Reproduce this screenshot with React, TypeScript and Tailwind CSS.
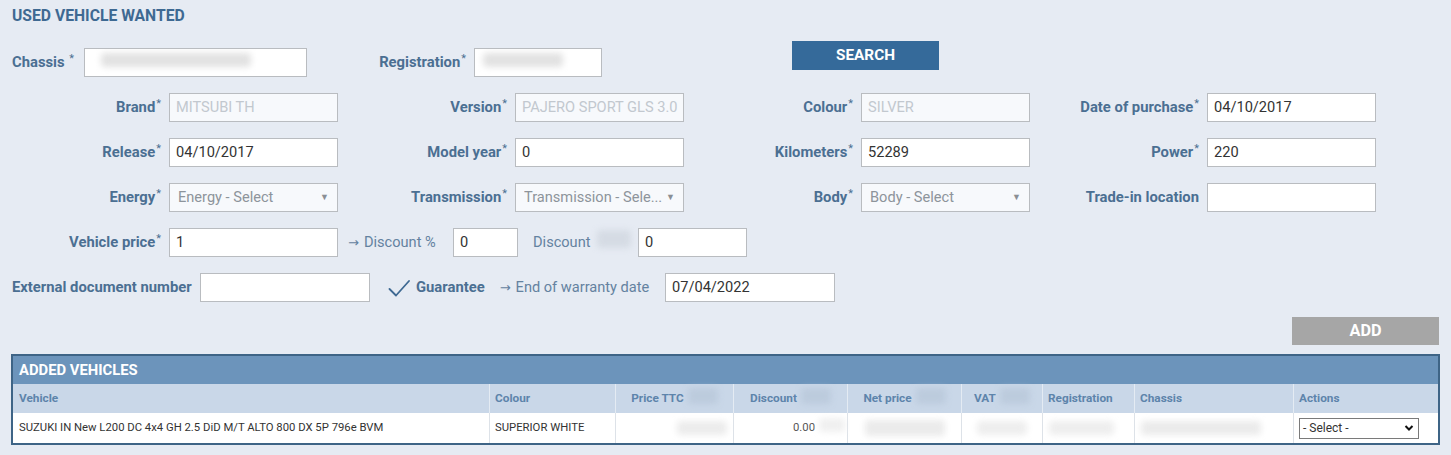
import React from "react";

const LABEL = "text-[#4b6f92] font-bold text-[14.8px] whitespace-nowrap";
const PLAIN = "text-[14.6px] text-[#6482a0] whitespace-nowrap";

function Star() {
  return <span className="relative -top-[5px] ml-[1px] text-[11px] font-normal">*</span>;
}

function Label({ text, star = true }: { text: string; star?: boolean }) {
  return (
    <div className={`w-[161px] text-right ${LABEL}`}>
      {text}
      {star && <Star />}
    </div>
  );
}

function Box({
  value = "",
  disabled = false,
  w = "w-[169px]",
  children,
}: {
  value?: string;
  disabled?: boolean;
  w?: string;
  children?: React.ReactNode;
}) {
  return (
    <div
      className={`${w} shrink-0 h-[29px] border border-[#b9bcc0] flex items-center px-[6px] text-[14.6px] overflow-hidden whitespace-nowrap ${
        disabled ? "bg-[#f7f9fc] text-[#c2c8cf]" : "bg-white text-[#333]"
      }`}
    >
      {value}
      {children}
    </div>
  );
}

function Select({ text }: { text: string }) {
  return (
    <div className="w-[169px] h-[29px] border border-[#b9bcc0] bg-[#f7f9fc] flex items-center pl-[8px] pr-[8px] text-[14.6px] text-[#8d949b] whitespace-nowrap">
      <span className="flex-1 overflow-hidden">{text}</span>
      <span className="text-[#8a8f95] text-[9px] ml-[4px]">▼</span>
    </div>
  );
}

function Cell({ label, star = true, children }: { label: string; star?: boolean; children: React.ReactNode }) {
  return (
    <div className="flex items-center gap-[8px] w-[346px] shrink-0">
      <Label text={label} star={star} />
      {children}
    </div>
  );
}

function Blur({ w, h = "h-[12px]", c = "bg-[#dfe2e6]" }: { w: string; h?: string; c?: string }) {
  return <span className={`inline-block ${w} ${h} ${c} blur-[3px] rounded`} />;
}

function Arrow() {
  return <span className="font-['DejaVu_Sans',sans-serif] text-[13px] mr-[5px]">→</span>;
}

const cols = [
  { w: "w-[476px]", name: "Vehicle", align: "left" },
  { w: "w-[126px]", name: "Colour", align: "left" },
  { w: "w-[118px]", name: "Price TTC", align: "center" },
  { w: "w-[114px]", name: "Discount", align: "center" },
  { w: "w-[114px]", name: "Net price", align: "center" },
  { w: "w-[81px]", name: "VAT", align: "center" },
  { w: "w-[92px]", name: "Registration", align: "left" },
  { w: "w-[159px]", name: "Chassis", align: "left" },
  { w: "flex-1", name: "Actions", align: "left" },
];

export default function App() {
  return (
    <div className="min-h-[455px] w-[1451px] bg-[#e6ebf3] font-['Roboto',sans-serif] overflow-hidden">
      <div className="pl-[12px] pt-[5px] h-[41px] text-[15.7px] font-bold text-[#3e6992] leading-[22px]">
        USED VEHICLE WANTED
      </div>

      {/* Row 1 */}
      <div className="flex items-start h-[36px]">
        <div className="flex items-center mt-[7px] pl-[12px]">
          <div className={`w-[72px] ${LABEL}`}>
            Chassis <Star />
          </div>
          <Box w="w-[223px]">
            <span className="ml-[10px]">
              <Blur w="w-[150px]" h="h-[14px]" c="bg-[#e2e2e2]" />
            </span>
          </Box>
          <div className={`w-[167px] pr-[8px] text-right ${LABEL}`}>
            Registration
            <Star />
          </div>
          <Box w="w-[128px]">
            <span className="ml-[2px]">
              <Blur w="w-[80px]" h="h-[14px]" c="bg-[#e2e2e2]" />
            </span>
          </Box>
        </div>
        <button className="ml-[190px] w-[147px] h-[29px] bg-[#356a9a] text-white font-bold text-[15.3px]">
          SEARCH
        </button>
      </div>

      <div className="flex flex-col gap-[16px] mt-[16px]">
        <div className="flex">
          <Cell label="Brand"><Box value="MITSUBI TH" disabled /></Cell>
          <Cell label="Version"><Box value="PAJERO SPORT GLS 3.0" disabled /></Cell>
          <Cell label="Colour"><Box value="SILVER" disabled /></Cell>
          <Cell label="Date of purchase"><Box value="04/10/2017" /></Cell>
        </div>
        <div className="flex">
          <Cell label="Release"><Box value="04/10/2017" /></Cell>
          <Cell label="Model year"><Box value="0" /></Cell>
          <Cell label="Kilometers"><Box value="52289" /></Cell>
          <Cell label="Power"><Box value="220" /></Cell>
        </div>
        <div className="flex">
          <Cell label="Energy"><Select text="Energy - Select" /></Cell>
          <Cell label="Transmission"><Select text="Transmission - Sele..." /></Cell>
          <Cell label="Body"><Select text="Body - Select" /></Cell>
          <Cell label="Trade-in location" star={false}><Box /></Cell>
        </div>
        <div className="flex items-center">
          <div className="flex items-center gap-[8px] w-[338px] shrink-0">
            <Label text="Vehicle price" />
            <Box value="1" />
          </div>
          <div className={`w-[115px] pl-[10px] ${PLAIN}`}>
            <Arrow />
            Discount %
          </div>
          <Box value="0" w="w-[65px]" />
          <div className={`w-[120px] pl-[15px] flex items-center ${PLAIN}`}>
            Discount
            <span className="ml-[6px]">
              <Blur w="w-[34px]" h="h-[18px]" c="bg-[#d5dbe4]" />
            </span>
          </div>
          <Box value="0" w="w-[109px]" />
        </div>
        <div className="flex items-center pl-[12px]">
          <div className={`w-[188px] ${LABEL}`}>External document number</div>
          <Box w="w-[170px]" />
          <div className="w-[295px] flex items-center pl-[18px]">
            <svg width="22" height="18" viewBox="0 0 22 18">
              <path d="M1.5 10 L8 16.5 L21 2" fill="none" stroke="#3e6992" strokeWidth="1.8" strokeLinecap="round" strokeLinejoin="round" />
            </svg>
            <span className={`ml-[6px] ${LABEL}`}>Guarantee</span>
            <span className={`ml-[15px] ${PLAIN}`}>
              <Arrow />
              End of warranty date
            </span>
          </div>
          <Box value="07/04/2022" w="w-[170px]" />
        </div>
      </div>

      <div className="flex justify-end pr-[12px] mt-[15px]">
        <button className="w-[147px] h-[28px] bg-[#a6a6a6] text-white font-bold text-[16.3px]">ADD</button>
      </div>

      {/* Table */}
      <div className="ml-[11px] w-[1429px] mt-[9px] border-2 border-[#3e6486]">
        <div className="h-[28px] bg-[#6c94bb] text-white font-bold text-[14.8px] flex items-center pl-[6px]">
          ADDED VEHICLES
        </div>
        <div className="flex h-[29px] bg-[#c9d7e8]">
          {cols.map((c, i) => (
            <div
              key={c.name}
              className={`${c.w} shrink-0 ${i > 0 ? "border-l border-[#e4ebf3] px-[5px]" : "px-[6px]"} flex items-center text-[11.8px] font-bold text-[#5d84ab] ${
                c.align === "center" ? "justify-center" : ""
              }`}
            >
              {c.name}
              {c.align === "center" && (
                <span className="ml-[4px]">
                  <Blur w="w-[30px]" h="h-[16px]" c="bg-[#bccbdd]" />
                </span>
              )}
            </div>
          ))}
        </div>
        <div className="flex h-[30px] bg-white text-[11.3px] text-[#333]">
          <div className="w-[476px] shrink-0 flex items-center px-[6px] whitespace-nowrap">
            SUZUKI IN New L200 DC 4x4 GH 2.5 DiD M/T ALTO 800 DX 5P 796e BVM
          </div>
          <div className="w-[126px] shrink-0 border-l border-[#dde2e8] flex items-center px-[5px]">SUPERIOR WHITE</div>
          <div className="w-[118px] shrink-0 border-l border-[#dde2e8] flex items-center justify-end pr-[6px]">
            <Blur w="w-[50px]" h="h-[14px]" c="bg-[#ececec]" />
          </div>
          <div className="w-[114px] shrink-0 border-l border-[#dde2e8] flex items-center justify-end pr-[2px] text-[#555]">
            0.00
            <span className="ml-[4px]">
              <Blur w="w-[26px]" h="h-[14px]" c="bg-[#f0f0f0]" />
            </span>
          </div>
          <div className="w-[114px] shrink-0 border-l border-[#dde2e8] flex items-center justify-center">
            <Blur w="w-[80px]" h="h-[16px]" c="bg-[#ebebeb]" />
          </div>
          <div className="w-[81px] shrink-0 border-l border-[#dde2e8] flex items-center justify-center">
            <Blur w="w-[50px]" h="h-[14px]" c="bg-[#eeeeee]" />
          </div>
          <div className="w-[92px] shrink-0 border-l border-[#dde2e8] flex items-center px-[6px]">
            <Blur w="w-[65px]" h="h-[14px]" c="bg-[#eeeeee]" />
          </div>
          <div className="w-[159px] shrink-0 border-l border-[#dde2e8] flex items-center px-[6px]">
            <Blur w="w-[120px]" h="h-[14px]" c="bg-[#ebebeb]" />
          </div>
          <div className="flex-1 border-l border-[#dde2e8] flex items-center px-[5px]">
            <div className="w-[120px] h-[21px] border border-[#7a7a7a] flex items-center pl-[3px] pr-[4px] text-[12px] text-[#333]">
              <span className="flex-1">- Select -</span>
              <svg width="10" height="8" viewBox="0 0 10 8">
                <path d="M1.5 2 L5 5.5 L8.5 2" fill="none" stroke="#111" strokeWidth="2" />
              </svg>
            </div>
          </div>
        </div>
      </div>
    </div>
  );
}
